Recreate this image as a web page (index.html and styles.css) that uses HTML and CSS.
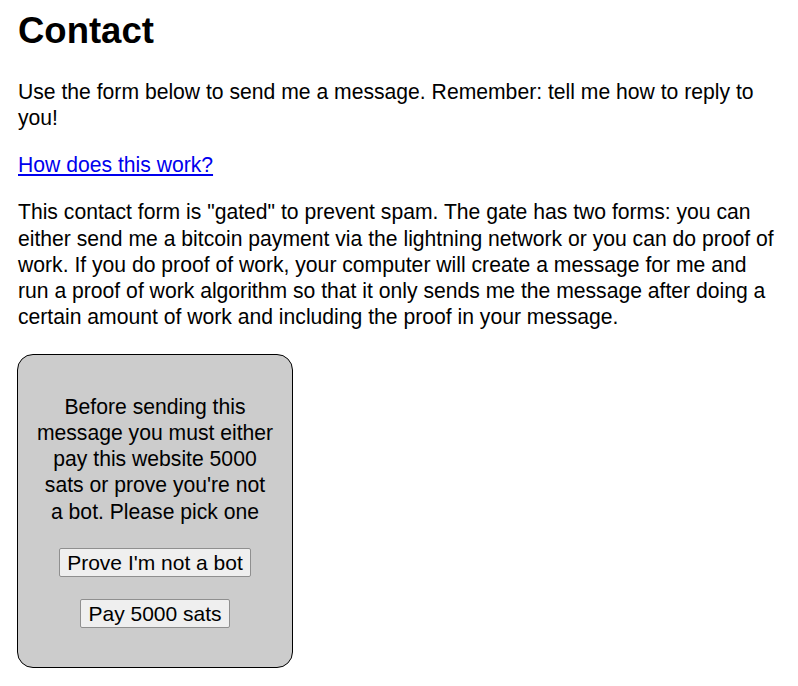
FILE: index.html
```html
<!DOCTYPE html>
<html lang="en">
<head>
<meta charset="utf-8">
<title>Contact</title>
<link rel="stylesheet" href="styles.css">
</head>
<body>
<main class="page">
  <h1 class="title">Contact</h1>
  <p class="para">Use the form below to send me a message. Remember: tell me how to reply to you!</p>
  <p class="para"><a class="link" href="#">How does this work?</a></p>
  <p class="para">This contact form is "gated" to prevent spam. The gate has two forms: you can either send me a bitcoin payment via the lightning network or you can do proof of work. If you do proof of work, your computer will create a message for me and run a proof of work algorithm so that it only sends me the message after doing a certain amount of work and including the proof in your message.</p>
  <div class="gate">
    <p class="gate-text">Before sending this message you must either pay this website 5000 sats or prove you're not a bot. Please pick one</p>
    <button class="gate-btn" type="button">Prove I'm not a bot</button>
    <button class="gate-btn" type="button">Pay 5000 sats</button>
  </div>
</main>
</body>
</html>
```
FILE: styles.css
```css
html, body {
  margin: 0;
  padding: 0;
  background: #ffffff;
}

body {
  font-family: "Liberation Sans", Arial, sans-serif;
  font-size: 21.15px;
  line-height: 26.25px;
  color: #000000;
}

.page {
  padding: 8px 20px 18px 18px;
}

.title {
  font-size: 36.5px;
  font-weight: bold;
  margin: 0 0 25px 0;
  line-height: 45.6px;
}

.para {
  margin: 0 0 21px 0;
}

.link {
  color: #0000ee;
  text-decoration: underline;
}

.gate {
  box-sizing: border-box;
  width: 276px;
  margin: 23px 0 0 -1px;
  padding: 39px 18.4px 39px 18.4px;
  background: #cccccc;
  border: 1px solid #000000;
  border-radius: 16px;
  display: flex;
  flex-direction: column;
  align-items: center;
  text-align: center;
}

.gate-text {
  margin: 0 0 23px 0;
}

.gate-btn {
  font-family: "Liberation Sans", Arial, sans-serif;
  font-size: 21px;
  line-height: 23px;
  color: #000000;
  background: #efefef;
  border: 1px solid #8f8f8f;
  border-radius: 2px;
  padding: 2px 7px;
  margin: 0;
}

.gate-btn + .gate-btn {
  margin-top: 22px;
}
```
